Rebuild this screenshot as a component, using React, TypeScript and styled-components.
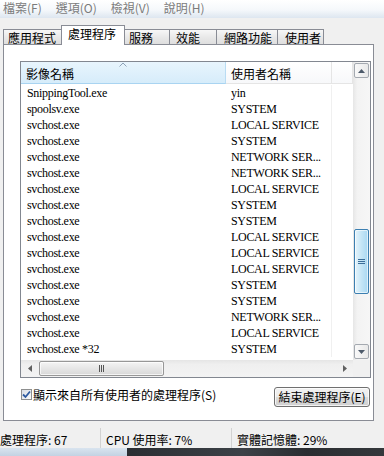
import React from 'react';
import styled, { createGlobalStyle, css } from 'styled-components';

const GlobalStyle = createGlobalStyle`
  html, body { margin: 0; padding: 0; }
  body { width: 384px; height: 456px; overflow: hidden; background: #f0f0f0; }
  * { box-sizing: border-box; }
`;

const UI = `"Noto Sans CJK TC", "Noto Sans", sans-serif`;
const SERIF = `"Liberation Serif", "Noto Sans CJK TC", serif`;

const Window = styled.div`
  width: 384px;
  height: 456px;
  display: flex;
  flex-direction: column;
  background: #f0f0f0;
  font-family: ${UI};
  font-size: 12px;
  color: #000;
  overflow: hidden;
`;

const MenuBar = styled.div`
  height: 18px;
  flex: none;
  display: flex;
  align-items: flex-start;
  padding-top: 1px;
  background: linear-gradient(#ffffff, #f5f8fb 55%, #dde6f0);
`;

const MenuList = styled.div`
  display: flex;
  margin-left: -4px;
`;

const MenuItem = styled.span`
  padding: 0 7px;
  color: #7b7b7b;
  line-height: 14px;
  white-space: nowrap;
`;

const TabStrip = styled.div`
  height: 26px;
  flex: none;
  display: flex;
  align-items: flex-end;
  padding-left: 3px;
  position: relative;
  z-index: 1;
`;

const Tab = styled.div<{ $active?: boolean; $w: number; $ml: number; $mr?: number; $pl: number }>`
  width: ${p => p.$w}px;
  height: 15px;
  margin-left: ${p => p.$ml}px;
  margin-right: ${p => p.$mr ?? 0}px;
  padding-left: ${p => p.$pl}px;
  border: 1px solid #898c95;
  border-bottom: none;
  background: linear-gradient(#f7f7f7, #e9e9e9 50%, #dedede);
  display: flex;
  align-items: center;
  line-height: 13px;
  white-space: nowrap;
  ${p =>
    p.$active &&
    css`
      height: 20px;
      margin-bottom: -1px;
      padding-bottom: 4px;
      background: #ffffff;
      position: relative;
      z-index: 2;
    `}
`;

const Panel = styled.div`
  margin-left: 3px;
  width: 371px;
  height: 377px;
  flex: none;
  border: 1px solid #898c95;
  background: #ffffff;
  padding: 16px 2px 0 16px;
  display: flex;
  flex-direction: column;
`;

const ListView = styled.div`
  height: 317px;
  flex: none;
  border: 1px solid #828790;
  display: grid;
  grid-template-columns: 1fr 17px;
  grid-template-rows: 1fr 17px;
  background: #ffffff;
`;

const ListContent = styled.div`
  overflow: hidden;
  display: flex;
  flex-direction: column;
`;

const HeaderRow = styled.div`
  height: 22px;
  flex: none;
  display: flex;
`;

const HeaderCell = styled.div<{ $w?: number; $sorted?: boolean }>`
  position: relative;
  ${p => (p.$w ? `width: ${p.$w}px; flex: none;` : 'flex: 1;')}
  display: flex;
  align-items: center;
  padding: 2px 0 0 5px;
  white-space: nowrap;
  background: linear-gradient(#ffffff, #f7f8fa);
  border-right: 1px solid #e5e5e5;
  border-bottom: 1px solid #e5e5e5;
  ${p =>
    p.$sorted &&
    css`
      background: linear-gradient(#e8f5fd, #d6ecfa);
      border-right: 1px solid #b9dcf3;
      border-bottom: 1px solid #a9d4f1;
    `}
`;

const SortArrow = styled.svg`
  position: absolute;
  top: 0;
  left: 50%;
  margin-left: -4px;
`;

const Rows = styled.div`
  display: flex;
  flex-direction: column;
  padding-top: 1px;
`;

const Row = styled.div`
  height: 16px;
  flex: none;
  display: flex;
  font-family: ${SERIF};
  font-size: 12px;
  letter-spacing: -0.3px;
  line-height: 16px;
`;

const Cell = styled.div<{ $w?: number; $line?: boolean; $pl?: number }>`
  ${p => (p.$w ? `width: ${p.$w}px; flex: none;` : 'flex: 1;')}
  padding-left: ${p => p.$pl ?? 5}px;
  white-space: nowrap;
  overflow: hidden;
  border-right: ${p => (p.$line ? '1px solid #f0f0f0' : 'none')};
`;

const VScroll = styled.div`
  grid-row: 1;
  grid-column: 2;
  display: flex;
  flex-direction: column;
  background: linear-gradient(to right, #e6e6e6, #f3f3f3 25%, #f6f6f6);
`;

const ScrollBtn = styled.div`
  height: 17px;
  flex: none;
  padding: 1px;
  display: flex;
`;

const BtnFace = styled.div`
  flex: 1;
  border: 1px solid #a4a9b0;
  border-radius: 2px;
  background: linear-gradient(to right, #f9f9f9, #e9e9e9);
  display: flex;
  align-items: center;
  justify-content: center;
`;

const VTrack = styled.div`
  flex: 1;
  display: flex;
  flex-direction: column;
`;

const VThumb = styled.div`
  margin: 0 1px;
  border: 1px solid #3c7fb1;
  border-radius: 2px;
  background: linear-gradient(to right, #e5f4fc, #c4e5f6 50%, #a9d8f2);
  box-shadow: inset 0 0 0 1px rgba(255, 255, 255, 0.6);
  display: flex;
  align-items: center;
  justify-content: center;
`;

const HScroll = styled.div`
  grid-row: 2;
  grid-column: 1;
  display: flex;
  background: linear-gradient(#e5e5e5, #efefef 25%, #f3f3f3);
`;

const HArrow = styled.div`
  width: 17px;
  flex: none;
  display: flex;
  align-items: center;
  justify-content: center;
`;

const HTrack = styled.div`
  flex: 1;
  display: flex;
  padding: 1px 0;
`;

const HThumb = styled.div`
  border: 1px solid #979797;
  border-radius: 2px;
  background: linear-gradient(#f4f4f4, #e6e6e6 50%, #d8d8d8);
  box-shadow: inset 0 0 0 1px rgba(255, 255, 255, 0.7);
  display: flex;
  align-items: center;
  justify-content: center;
`;

const Corner = styled.div`
  grid-row: 2;
  grid-column: 2;
  background: #f0f0f0;
`;

const OptionsRow = styled.div`
  margin: 9px 1px 0 1px;
  display: flex;
  justify-content: space-between;
  align-items: flex-start;
`;

const CheckLabel = styled.label`
  display: flex;
  align-items: center;
  gap: 1px;
  height: 14px;
  white-space: nowrap;
`;

const CheckBox = styled.span`
  width: 11px;
  height: 11px;
  border: 1px solid #8e8f8f;
  background: linear-gradient(135deg, #d8dde4, #fbfbfb);
  display: flex;
  align-items: center;
  justify-content: center;
`;

const Button = styled.button`
  width: 96px;
  height: 20px;
  padding: 0;
  border: 1px solid #707070;
  border-radius: 3px;
  background: linear-gradient(#f2f2f2, #ebebeb 50%, #dddddd 50%, #cfcfcf);
  box-shadow: inset 0 0 0 1px rgba(255, 255, 255, 0.75);
  font-family: ${UI};
  font-size: 12px;
  line-height: 16px;
  color: #000;
  white-space: nowrap;
`;

const StatusBar = styled.div`
  margin-top: 5px;
  height: 22px;
  flex: none;
  display: flex;
`;

const StatusCell = styled.div<{ $w?: number; $pl: number }>`
  ${p => (p.$w ? `width: ${p.$w}px; flex: none;` : 'flex: 1;')}
  padding: 3px 0 0 ${p => p.$pl}px;
  display: flex;
  align-items: center;
  white-space: nowrap;
  border-right: ${p => (p.$w ? '1px solid #d2d2d2' : 'none')};
  margin-top: 2px;
`;

const StatusText = styled.span``;

const Taskbar = styled.div`
  flex: 1;
  display: flex;
`;

const TaskbarLeft = styled.div`
  width: 127px;
  background: linear-gradient(#d9e4ef, #c2d2e2);
`;

const TaskbarRest = styled.div`
  flex: 1;
  background: linear-gradient(to right, #2a2e33, #3c4147 45%, #2a2d31 70%, #34383c);
`;

const tabs = [
  { label: '應用程式', w: 61, ml: 0, pl: 4 },
  { label: '處理程序', w: 64, ml: -3, mr: -3, pl: 6, active: true },
  { label: '服務', w: 48, ml: 0, pl: 6 },
  { label: '效能', w: 48, ml: -1, pl: 6 },
  { label: '網路功能', w: 62, ml: -1, pl: 7 },
  { label: '使用者', w: 47, ml: -1, pl: 7 },
];

const rows: [string, string][] = [
  ['SnippingTool.exe', 'yin'],
  ['spoolsv.exe', 'SYSTEM'],
  ['svchost.exe', 'LOCAL SERVICE'],
  ['svchost.exe', 'SYSTEM'],
  ['svchost.exe', 'NETWORK SER...'],
  ['svchost.exe', 'NETWORK SER...'],
  ['svchost.exe', 'LOCAL SERVICE'],
  ['svchost.exe', 'SYSTEM'],
  ['svchost.exe', 'SYSTEM'],
  ['svchost.exe', 'LOCAL SERVICE'],
  ['svchost.exe', 'LOCAL SERVICE'],
  ['svchost.exe', 'LOCAL SERVICE'],
  ['svchost.exe', 'SYSTEM'],
  ['svchost.exe', 'SYSTEM'],
  ['svchost.exe', 'NETWORK SER...'],
  ['svchost.exe', 'LOCAL SERVICE'],
  ['svchost.exe *32', 'SYSTEM'],
];

const scroll = { offset: 150, size: 65 };
const hscroll = { offset: 1, size: 125 };

export default function App() {
  return (
    <>
      <GlobalStyle />
      <Window>
        <MenuBar>
          <MenuList>
            <MenuItem>檔案(F)</MenuItem>
            <MenuItem>選項(O)</MenuItem>
            <MenuItem>檢視(V)</MenuItem>
            <MenuItem>說明(H)</MenuItem>
          </MenuList>
        </MenuBar>
        <TabStrip>
          {tabs.map(t => (
            <Tab key={t.label} $active={t.active} $w={t.w} $ml={t.ml} $mr={t.mr} $pl={t.pl}>
              {t.label}
            </Tab>
          ))}
        </TabStrip>
        <Panel>
          <ListView>
            <ListContent>
              <HeaderRow>
                <HeaderCell $w={205} $sorted>
                  影像名稱
                  <SortArrow width="8" height="5" viewBox="0 0 8 5">
                    <path d="M0.5 4.5 L4 1 L7.5 4.5" fill="none" stroke="#8ea3b8" strokeWidth="1" />
                  </SortArrow>
                </HeaderCell>
                <HeaderCell $w={106}>使用者名稱</HeaderCell>
                <HeaderCell />
              </HeaderRow>
              <Rows>
                {rows.map(([name, user], i) => (
                  <Row key={i}>
                    <Cell $w={205} $pl={6}>{name}</Cell>
                    <Cell $w={106} $line>{user}</Cell>
                    <Cell />
                  </Row>
                ))}
              </Rows>
            </ListContent>
            <VScroll>
              <ScrollBtn>
                <BtnFace>
                  <svg width="7" height="4" viewBox="0 0 7 4">
                    <path d="M0 4 L3.5 0 L7 4 Z" fill="#4d5a6a" />
                  </svg>
                </BtnFace>
              </ScrollBtn>
              <VTrack>
                <VThumb style={{ marginTop: scroll.offset, height: scroll.size }}>
                  <svg width="7" height="6" viewBox="0 0 7 6">
                    <path d="M0 0.5 H7 M0 2.5 H7 M0 4.5 H7" stroke="#3b6e9a" strokeWidth="1" />
                  </svg>
                </VThumb>
              </VTrack>
              <ScrollBtn>
                <BtnFace>
                  <svg width="7" height="4" viewBox="0 0 7 4">
                    <path d="M0 0 L3.5 4 L7 0 Z" fill="#4d5a6a" />
                  </svg>
                </BtnFace>
              </ScrollBtn>
            </VScroll>
            <HScroll>
              <HArrow>
                <svg width="4" height="7" viewBox="0 0 4 7">
                  <path d="M4 0 L0 3.5 L4 7 Z" fill="#606060" />
                </svg>
              </HArrow>
              <HTrack>
                <HThumb style={{ marginLeft: hscroll.offset, width: hscroll.size }}>
                  <svg width="6" height="7" viewBox="0 0 6 7">
                    <path d="M0.5 0 V7 M2.5 0 V7 M4.5 0 V7" stroke="#555" strokeWidth="1" />
                  </svg>
                </HThumb>
              </HTrack>
              <HArrow>
                <svg width="4" height="7" viewBox="0 0 4 7">
                  <path d="M0 0 L4 3.5 L0 7 Z" fill="#606060" />
                </svg>
              </HArrow>
            </HScroll>
            <Corner />
          </ListView>
          <OptionsRow>
            <CheckLabel>
              <CheckBox>
                <svg width="9" height="9" viewBox="0 0 9 9">
                  <path d="M1 4.5 L3.5 7 L8 1.5" fill="none" stroke="#2e5aa0" strokeWidth="1.8" />
                </svg>
              </CheckBox>
              顯示來自所有使用者的處理程序(S)
            </CheckLabel>
            <Button>結束處理程序(E)</Button>
          </OptionsRow>
        </Panel>
        <StatusBar>
          <StatusCell $w={101} $pl={0}>
            <StatusText>處理程序: 67</StatusText>
          </StatusCell>
          <StatusCell $w={131} $pl={5}>
            <StatusText>CPU 使用率: 7%</StatusText>
          </StatusCell>
          <StatusCell $pl={5}>
            <StatusText>實體記憶體: 29%</StatusText>
          </StatusCell>
        </StatusBar>
        <Taskbar>
          <TaskbarLeft />
          <TaskbarRest />
        </Taskbar>
      </Window>
    </>
  );
}
